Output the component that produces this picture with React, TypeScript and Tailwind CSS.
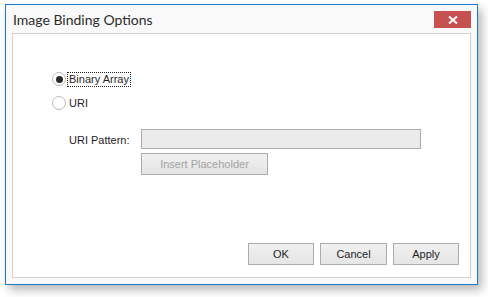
import React, { useState } from 'react';

const body = { fontFamily: '"Liberation Sans", Arial, sans-serif' };

function Radio({ checked, label, focused, onClick }: { checked: boolean; label: string; focused?: boolean; onClick: () => void }) {
  return (
    <button onClick={onClick} className="flex items-center h-[14px] text-[11px] text-[#1e1e1e]" style={body}>
      <span className="w-[14px] h-[14px] rounded-full border border-[#b9b9b9] bg-white flex items-center justify-center">
        {checked && <span className="w-[7px] h-[7px] rounded-full bg-[#2b2b2b]" />}
      </span>
      <span className={`ml-[1px] px-[1px] leading-[13px] border border-dotted ${focused ? 'border-[#222]' : 'border-transparent'}`}>{label}</span>
    </button>
  );
}

function Btn({ children, w, disabled }: { children: React.ReactNode; w: string; disabled?: boolean }) {
  return (
    <button
      className={`${w} h-[22px] border border-[#acacac] bg-gradient-to-b from-[#f0f0f0] to-[#e5e5e5] text-[11px] ${disabled ? 'text-[#a3a3a3]' : 'text-[#1e1e1e]'}`}
      style={body}
    >
      {children}
    </button>
  );
}

export default function App() {
  const [mode, setMode] = useState<'binary' | 'uri'>('binary');

  return (
    <div className="w-[488px] h-[297px] bg-white pl-[5px] pt-[4px]">
      <div className="w-[473px] h-[281px] border border-[#1979ca] bg-[#f9f9f9] flex flex-col shadow-[4px_5px_9px_rgba(0,0,0,0.28)]">
        {/* Title bar */}
        <div className="h-[28px] flex items-start justify-between pl-[7px] pr-[6px]">
          <span className="mt-[5px] text-[14px] leading-[19px] text-[#2b2b2b]" style={{ fontFamily: 'Lato, "Open Sans", sans-serif' }}>
            Image Binding Options
          </span>
          <button className="mt-[6px] w-[37px] h-[17px] bg-[#c75050] flex items-center justify-center">
            <svg width="10" height="8" viewBox="0 0 10 8">
              <path d="M1 0.5 L9 7.5 M9 0.5 L1 7.5" stroke="white" strokeWidth="2" />
            </svg>
          </button>
        </div>

        {/* Content panel */}
        <div className="mx-[6px] mb-[6px] flex-1 border border-[#d2d2d2] bg-white flex flex-col justify-between">
          <div className="pt-[38px] pl-[39px]">
            <Radio checked={mode === 'binary'} label="Binary Array" focused onClick={() => setMode('binary')} />
            <div className="mt-[10px]">
              <Radio checked={mode === 'uri'} label="URI" onClick={() => setMode('uri')} />
            </div>

            <div className="mt-[19px] flex">
              <div className="w-[89px] pl-[17px] pt-[3px] whitespace-nowrap text-[11px] text-[#1e1e1e]" style={body}>URI Pattern:</div>
              <div className="flex flex-col gap-[4px]">
                <div className="w-[280px] h-[20px] border border-[#acacac] bg-[#ebebeb]" />
                <Btn w="w-[127px]" disabled>Insert Placeholder</Btn>
              </div>
            </div>
          </div>

          <div className="flex justify-end gap-[6px] pr-[11px] pb-[12px]">
            <Btn w="w-[66px]">OK</Btn>
            <Btn w="w-[67px]">Cancel</Btn>
            <Btn w="w-[66px]">Apply</Btn>
          </div>
        </div>
      </div>
    </div>
  );
}
